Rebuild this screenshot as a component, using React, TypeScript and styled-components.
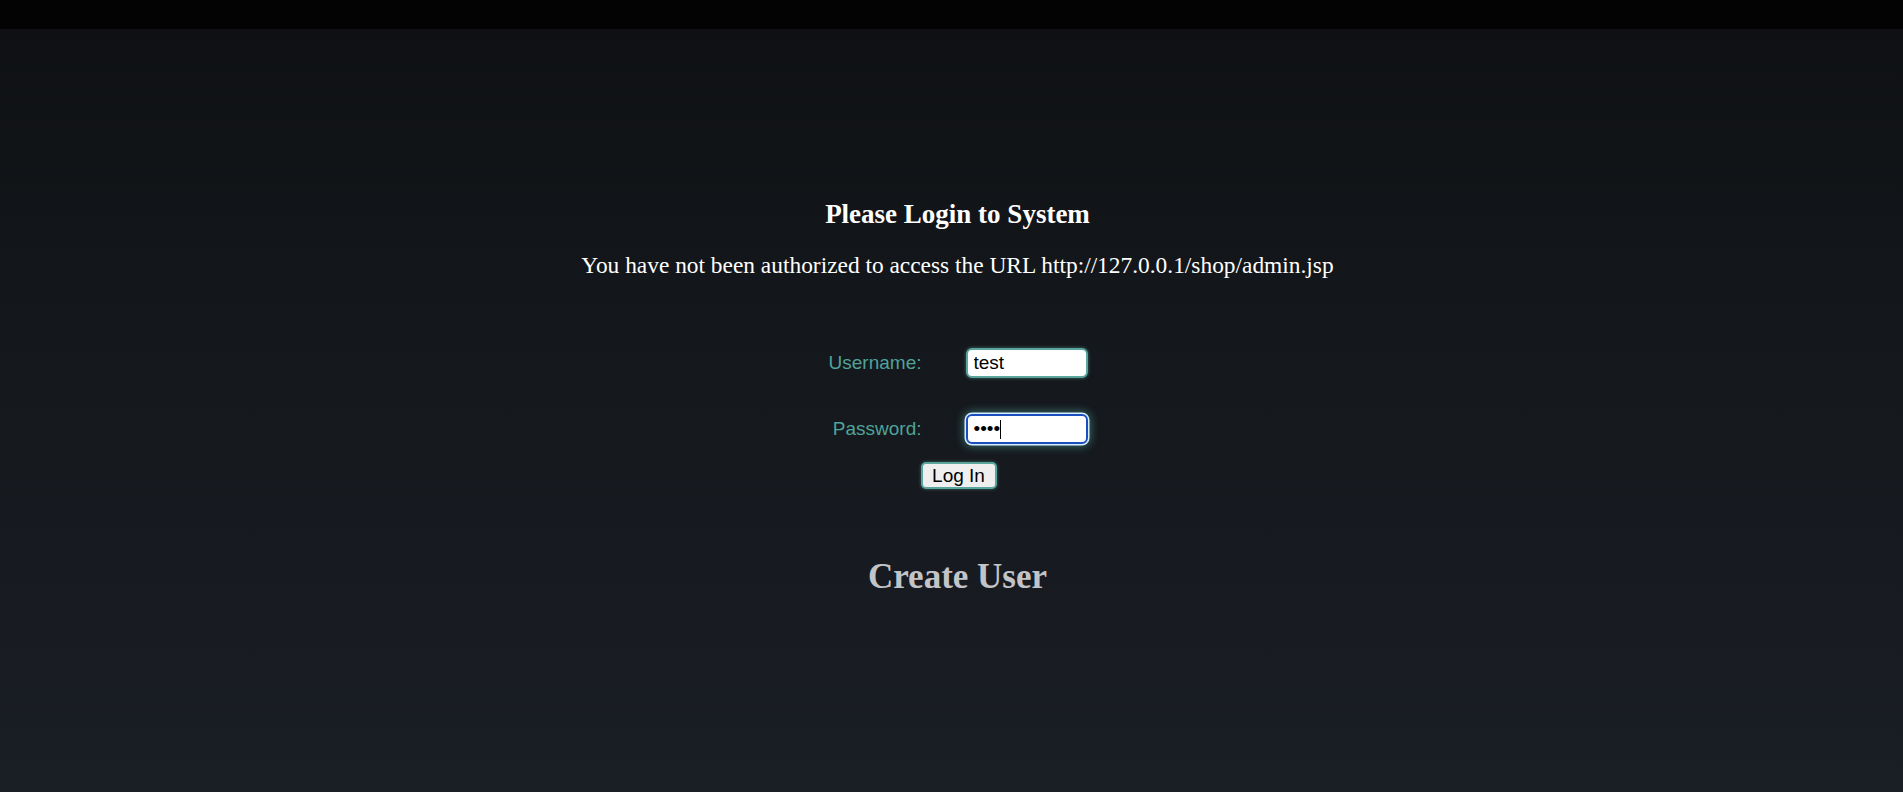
import React from "react";
import styled, { createGlobalStyle } from "styled-components";

const Global = createGlobalStyle`
  html, body { margin: 0; padding: 0; }
  body { background: #16191e; }
`;

const Page = styled.div`
  min-height: 100vh;
  display: flex;
  flex-direction: column;
  background: linear-gradient(180deg, #0e1013 0%, #14171b 40%, #1a1e25 100%);
`;

const TopBar = styled.div`
  height: 29px;
  background: #030303;
  flex-shrink: 0;
`;

const Content = styled.main`
  display: flex;
  flex-direction: column;
  align-items: center;
  padding-top: 170px;
  padding-left: 12px;
`;

const Title = styled.h2`
  margin: 0;
  font-family: "Liberation Serif", "Times New Roman", serif;
  font-weight: bold;
  font-size: 27px;
  line-height: 30px;
  color: #ffffff;
`;

const Notice = styled.p`
  margin: 23px 0 0;
  font-family: "Liberation Serif", "Times New Roman", serif;
  font-size: 23.4px;
  line-height: 27px;
  color: #ffffff;
`;

const Form = styled.form`
  margin-top: 69px;
  margin-right: 10px;
  display: grid;
  grid-template-columns: 104px 122px;
  column-gap: 44px;
  row-gap: 36px;
  align-items: center;
`;

const Label = styled.label`
  justify-self: end;
  font-family: "Liberation Sans", Arial, sans-serif;
  font-size: 19px;
  color: #4fa39a;
`;

const FieldWrap = styled.div`
  position: relative;
  width: 122px;
  height: 30px;
`;

const Input = styled.input<{ $focused?: boolean }>`
  box-sizing: border-box;
  width: 100%;
  height: 100%;
  padding: 0 6px;
  font-family: "Liberation Sans", Arial, sans-serif;
  font-size: 19px;
  color: #000;
  background: #fff;
  border-radius: 6px;
  outline: none;
  border: 2px solid ${(p) => (p.$focused ? "#1b4fbf" : "#5aa59d")};
  box-shadow: ${(p) =>
    p.$focused
      ? "0 0 0 1.5px #d6ecff, 0 0 8px 3px rgba(90, 190, 180, 0.45)"
      : "0 0 3px 1px rgba(90, 170, 160, 0.35)"};
`;

const Caret = styled.span`
  position: absolute;
  left: 34px;
  top: 6px;
  width: 1.5px;
  height: 19px;
  background: #000;
`;

const SubmitRow = styled.div`
  grid-column: 1 / span 2;
  justify-self: center;
  margin-top: -18px;
  margin-left: 12px;
`;

const Button = styled.button`
  box-sizing: border-box;
  width: 76px;
  height: 27px;
  padding: 0;
  font-family: "Liberation Sans", Arial, sans-serif;
  font-size: 19px;
  color: #000;
  background: #efefef;
  border: 2px solid #5aa59d;
  border-radius: 5px;
  box-shadow: 0 0 3px 1px rgba(90, 170, 160, 0.3);
  cursor: pointer;
`;

const CreateLink = styled.h1`
  margin: 68px 0 0;
  font-family: "Liberation Serif", "Times New Roman", serif;
  font-weight: bold;
  font-size: 35px;
  line-height: 40px;
  color: #c3c4c8;
  cursor: pointer;
`;

export default function App() {
  return (
    <>
      <Global />
      <Page>
        <TopBar />
        <Content>
          <Title>Please Login to System</Title>
          <Notice>
            You have not been authorized to access the URL http://127.0.0.1/shop/admin.jsp
          </Notice>
          <Form onSubmit={(e) => e.preventDefault()}>
            <Label htmlFor="username">Username:</Label>
            <FieldWrap>
              <Input id="username" type="text" defaultValue="test" />
            </FieldWrap>
            <Label htmlFor="password">Password:</Label>
            <FieldWrap>
              <Input id="password" type="password" defaultValue="test" $focused />
              <Caret />
            </FieldWrap>
            <SubmitRow>
              <Button type="submit">Log In</Button>
            </SubmitRow>
          </Form>
          <CreateLink>Create User</CreateLink>
        </Content>
      </Page>
    </>
  );
}
